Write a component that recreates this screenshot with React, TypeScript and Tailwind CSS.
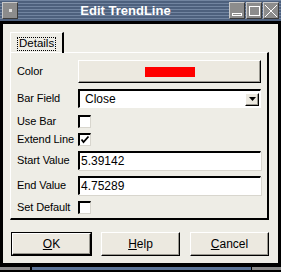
import React from "react";

const face = "bg-[#ece9e0]";

function Raised({ className, children }: { className?: string; children?: React.ReactNode }) {
  return (
    <div
      className={`${face} border-t border-l border-t-white border-l-white border-b border-r border-b-black border-r-black shadow-[inset_-1px_-1px_0_#9a9890] ${className ?? ""}`}
    >
      {children}
    </div>
  );
}

function Check({ checked }: { checked?: boolean }) {
  return (
    <div className="w-[13px] h-[13px] bg-white border-t-2 border-l-2 border-t-black border-l-black border-b border-r border-b-[#d8d6ce] border-r-[#d8d6ce] relative">
      {checked && (
        <svg className="absolute left-[0px] top-[0px]" width="10" height="10" viewBox="0 0 10 10">
          <path d="M1.5 4.5 L3.5 7 L8.5 1.5" stroke="black" strokeWidth="1.8" fill="none" />
        </svg>
      )}
    </div>
  );
}

function Label({ children }: { children: React.ReactNode }) {
  return <div className="w-[61px] shrink-0 leading-none whitespace-nowrap text-[11px] tracking-[-0.1px]">{children}</div>;
}

function Field({ value }: { value: string }) {
  return (
    <div className="w-[183px] h-[19px] bg-white border-t-2 border-l-2 border-t-black border-l-black border-b border-r border-b-white border-r-white shadow-[1px_1px_0_#d8d6ce] flex items-center pl-[1px] leading-none text-[12px]">
      {value}
    </div>
  );
}

function TitleBtn({ children }: { children: React.ReactNode }) {
  return (
    <div className="w-[16px] h-[17px] bg-[#8c8c8c] border-t border-l border-t-[#c8c8c8] border-l-[#c8c8c8] border-b border-r border-b-[#3a3a3a] border-r-[#3a3a3a] flex items-center justify-center">
      {children}
    </div>
  );
}

export default function App() {
  return (
    <div className="w-[281px] h-[272px] bg-black flex flex-col font-['Liberation_Sans',Arial,sans-serif] text-[11.5px] text-black overflow-hidden">
      {/* title bar */}
      <div className="h-[21px] flex items-center px-[2px] bg-[repeating-linear-gradient(to_bottom,#7184a0_0px,#7184a0_1px,#4d607d_1px,#4d607d_3px)]">
        <TitleBtn>
          <div className="w-[3px] h-[3px] bg-[#e0e0e0]" />
        </TitleBtn>
        <div className="flex-1 text-center text-white font-bold text-[13px] leading-none pl-[4px]">Edit TrendLine</div>
        <div className="flex gap-[1px]">
          <TitleBtn>
            <div className="w-[10px] h-[3px] border border-white mt-[8px]" />
          </TitleBtn>
          <TitleBtn>
            <div className="w-[11px] h-[10px] border border-white" />
          </TitleBtn>
          <TitleBtn>
            <svg width="14" height="14" viewBox="0 0 14 14">
              <path d="M1 1 L13 13 M13 1 L1 13" stroke="white" strokeWidth="1" />
            </svg>
          </TitleBtn>
        </div>
      </div>
      <div className="h-[3px]" />

      {/* body */}
      <div className="mx-[3px] h-[239px] bg-[#eeede6] flex flex-col pt-[8px] pl-[7px]">
        {/* tab */}
        <div className="w-[54px] h-[21px] border-t border-l border-t-white border-l-white border-r-2 border-r-black flex items-start pt-[4px] pl-[6px] relative z-10">
          <div className="border border-dotted border-black px-[1px] h-[14px] flex items-center leading-none">Details</div>
        </div>
        {/* panel */}
        <div className="w-[259px] h-[168px] -mt-[1px] border-t border-l border-t-white border-l-white border-r-2 border-b-2 border-r-black border-b-black flex flex-col pl-[6px]">
          <div className="flex items-center mt-[7px] h-[23px]">
            <Label>Color</Label>
            <Raised className="w-[183px] h-[23px] flex items-center justify-center">
              <div className="w-[50px] h-[10px] bg-[#ff0000]" />
            </Raised>
          </div>
          <div className="flex items-center mt-[6px] h-[19px]">
            <Label>Bar Field</Label>
            <div className="w-[183px] h-[19px] bg-white border-t-2 border-l-2 border-t-black border-l-black border-b border-r border-b-white border-r-white flex items-center justify-between">
              <span className="pl-[5px] leading-none text-[12px]">Close</span>
              <Raised className="w-[14px] h-[13px] mr-[1px] flex items-center justify-center">
                <svg width="7" height="4" viewBox="0 0 7 4">
                  <path d="M0 0 L7 0 L3.5 4 Z" fill="black" />
                </svg>
              </Raised>
            </div>
          </div>
          <div className="flex items-center mt-[7px] h-[13px]">
            <Label>Use Bar</Label>
            <Check />
          </div>
          <div className="flex items-center mt-[5px] h-[13px]">
            <Label>Extend Line</Label>
            <Check checked />
          </div>
          <div className="flex items-center mt-[5px] h-[19px]">
            <Label>Start Value</Label>
            <Field value="5.39142" />
          </div>
          <div className="flex items-center mt-[6px] h-[19px]">
            <Label>End Value</Label>
            <Field value="4.75289" />
          </div>
          <div className="flex items-center mt-[6px] h-[13px]">
            <Label>Set Default</Label>
            <Check />
          </div>
        </div>

        {/* buttons */}
        <div className="flex mt-[12px] pl-[1px] text-[12px]">
          <div className="w-[81px] h-[24px] border border-black">
            <Raised className="w-full h-full flex items-center justify-center leading-none">
              <span><span className="underline">O</span>K</span>
            </Raised>
          </div>
          <Raised className="w-[79px] h-[24px] ml-[9px] flex items-center justify-center leading-none">
            <span><span className="underline">H</span>elp</span>
          </Raised>
          <Raised className="w-[79px] h-[24px] ml-[10px] flex items-center justify-center leading-none">
            <span><span className="underline">C</span>ancel</span>
          </Raised>
        </div>
      </div>

      <div className="h-[4px]" />
      <div className="h-[3px] flex">
        <div className="w-[30px] bg-[#8a8a8a]" />
        <div className="w-[2px]" />
        <div className="w-[219px] bg-[#5b7396]" />
        <div className="w-[1px]" />
        <div className="flex-1 bg-[#8a8a8a]" />
      </div>
    </div>
  );
}
